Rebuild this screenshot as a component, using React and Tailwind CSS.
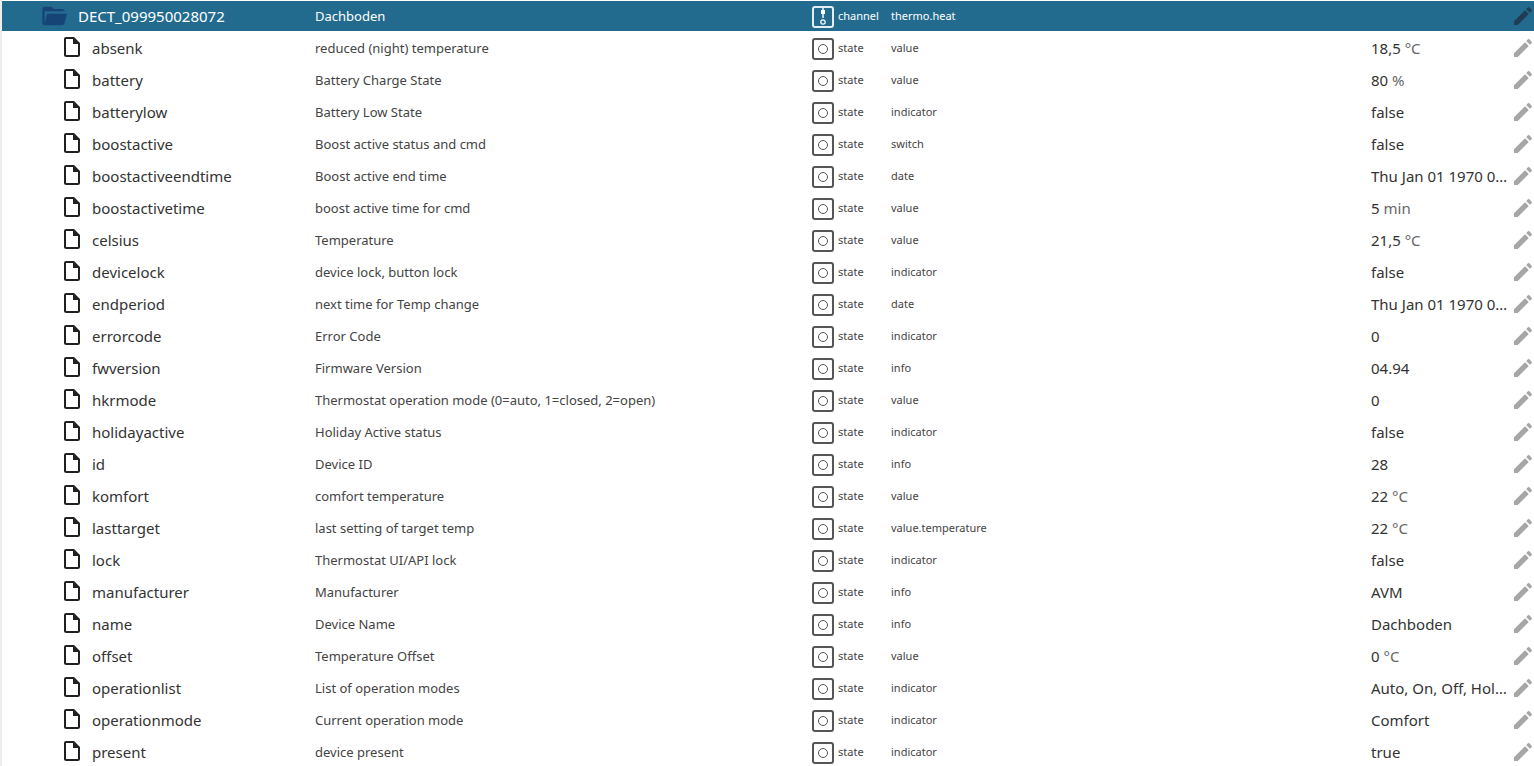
const ROWS = [
  ["absenk", "reduced (night) temperature", "value", "18,5", "°C"],
  ["battery", "Battery Charge State", "value", "80", "%"],
  ["batterylow", "Battery Low State", "indicator", "false"],
  ["boostactive", "Boost active status and cmd", "switch", "false"],
  ["boostactiveendtime", "Boost active end time", "date", "Thu Jan 01 1970 01:00:00"],
  ["boostactivetime", "boost active time for cmd", "value", "5", "min"],
  ["celsius", "Temperature", "value", "21,5", "°C"],
  ["devicelock", "device lock, button lock", "indicator", "false"],
  ["endperiod", "next time for Temp change", "date", "Thu Jan 01 1970 01:00:00"],
  ["errorcode", "Error Code", "indicator", "0"],
  ["fwversion", "Firmware Version", "info", "04.94"],
  ["hkrmode", "Thermostat operation mode (0=auto, 1=closed, 2=open)", "value", "0"],
  ["holidayactive", "Holiday Active status", "indicator", "false"],
  ["id", "Device ID", "info", "28"],
  ["komfort", "comfort temperature", "value", "22", "°C"],
  ["lasttarget", "last setting of target temp", "value.temperature", "22", "°C"],
  ["lock", "Thermostat UI/API lock", "indicator", "false"],
  ["manufacturer", "Manufacturer", "info", "AVM"],
  ["name", "Device Name", "info", "Dachboden"],
  ["offset", "Temperature Offset", "value", "0", "°C"],
  ["operationlist", "List of operation modes", "indicator", "Auto, On, Off, Holiday, Comfort"],
  ["operationmode", "Current operation mode", "indicator", "Comfort"],
  ["present", "device present", "indicator", "true"],
];

function FileIcon() {
  return (
    <svg width="24" height="24" viewBox="0 0 24 24" className="text-[#212121] shrink-0 mb-[2px]">
      <path fill="currentColor" d="M14 2H6c-1.1 0-1.99.9-1.99 2L4 20c0 1.1.89 2 1.99 2H18c1.1 0 2-.9 2-2V8l-6-6zM6 20V4h7v5h5v11H6z" />
    </svg>
  );
}

function FolderOpenIcon() {
  return (
    <svg width="28" height="28" viewBox="0 0 24 24" className="text-[#164477] shrink-0">
      <path fill="currentColor" d="M19 20H4c-1.11 0-2-.9-2-2V6c0-1.11.89-2 2-2h6l2 2h7c1.1 0 2 .9 2 2H4v10l2.14-8h17.07l-2.28 8.5c-.23.87-1.01 1.5-1.93 1.5z" />
    </svg>
  );
}

function PencilIcon({ className }) {
  return (
    <svg width="24" height="24" viewBox="0 0 24 24" className={className}>
      <path fill="currentColor" d="M3 17.25V21h3.75L17.81 9.94l-3.75-3.75L3 17.25zM20.71 7.04a1 1 0 0 0 0-1.41l-2.34-2.34a1 1 0 0 0-1.41 0l-1.83 1.83 3.75 3.75 1.83-1.83z" />
    </svg>
  );
}

function StateIcon() {
  return (
    <span className="flex items-center justify-center w-[22px] h-[22px] mt-[2px] rounded-[3px] border-2 border-[#555] shrink-0">
      <span className="block w-[10px] h-[10px] rounded-full border-[1.5px] border-[#555]" />
    </span>
  );
}

function ChannelIcon() {
  return (
    <span className="flex flex-col items-center justify-center w-[22px] h-[22px] mt-[2px] rounded-[3px] border-2 border-[#e3eef4] shrink-0">
      <svg width="10" height="18" viewBox="0 0 10 18" className="text-white">
        <rect x="3" y="2" width="4" height="4" fill="currentColor" />
        <path d="M5 0v10" stroke="currentColor" strokeWidth="1.4" />
        <circle cx="5" cy="14" r="2.2" fill="none" stroke="currentColor" strokeWidth="1.2" />
      </svg>
    </span>
  );
}

function Row({ name, desc, role, value, unit }) {
  return (
    <div className="flex items-center h-8">
      <div className="flex items-center w-[313px] shrink-0 pl-[58px]">
        <FileIcon />
        <span className="ml-[8px] text-[15px] text-[#333]">{name}</span>
      </div>
      <div className="w-[495px] shrink-0 pt-[2px] text-[13px] text-[#444] whitespace-nowrap">{desc}</div>
      <div className="flex items-center w-[81px] shrink-0 pl-[2px]">
        <StateIcon />
        <span className="ml-[4px] text-[11px] text-[#444]">state</span>
      </div>
      <div className="w-[480px] shrink-0 text-[11px] text-[#444]">{role}</div>
      <div className="w-[140px] shrink-0 pr-[2px] text-[15px] text-[#333] truncate">
        {value}
        {unit && <span className="text-[#666]"> {unit}</span>}
      </div>
      <PencilIcon className="text-[#a6a6a6] shrink-0" />
    </div>
  );
}

export default function App() {
  return (
    <div className="w-[1534px] h-[766px] overflow-hidden bg-white font-['Noto_Sans','Open_Sans',sans-serif]">
      <div className="h-full border-l-2 border-[#eeeeee] -mr-[2px]">
        <div className="h-8 pt-px">
          <div className="flex items-center h-[30px] bg-[#236b8e] text-white">
            <div className="flex items-center w-[313px] shrink-0 pl-[38px]">
              <FolderOpenIcon />
              <span className="ml-[10px] text-[15px]">DECT_099950028072</span>
            </div>
            <div className="w-[495px] shrink-0 pt-[2px] text-[13px]">Dachboden</div>
            <div className="flex items-center w-[81px] shrink-0 pl-[2px]">
              <ChannelIcon />
              <span className="ml-[4px] text-[11px]">channel</span>
            </div>
            <div className="w-[620px] shrink-0 text-[11px]">thermo.heat</div>
            <PencilIcon className="text-[#1f3e55] shrink-0" />
          </div>
        </div>
        {ROWS.map(([name, desc, role, value, unit]) => (
          <Row key={name} name={name} desc={desc} role={role} value={value} unit={unit} />
        ))}
      </div>
    </div>
  );
}
